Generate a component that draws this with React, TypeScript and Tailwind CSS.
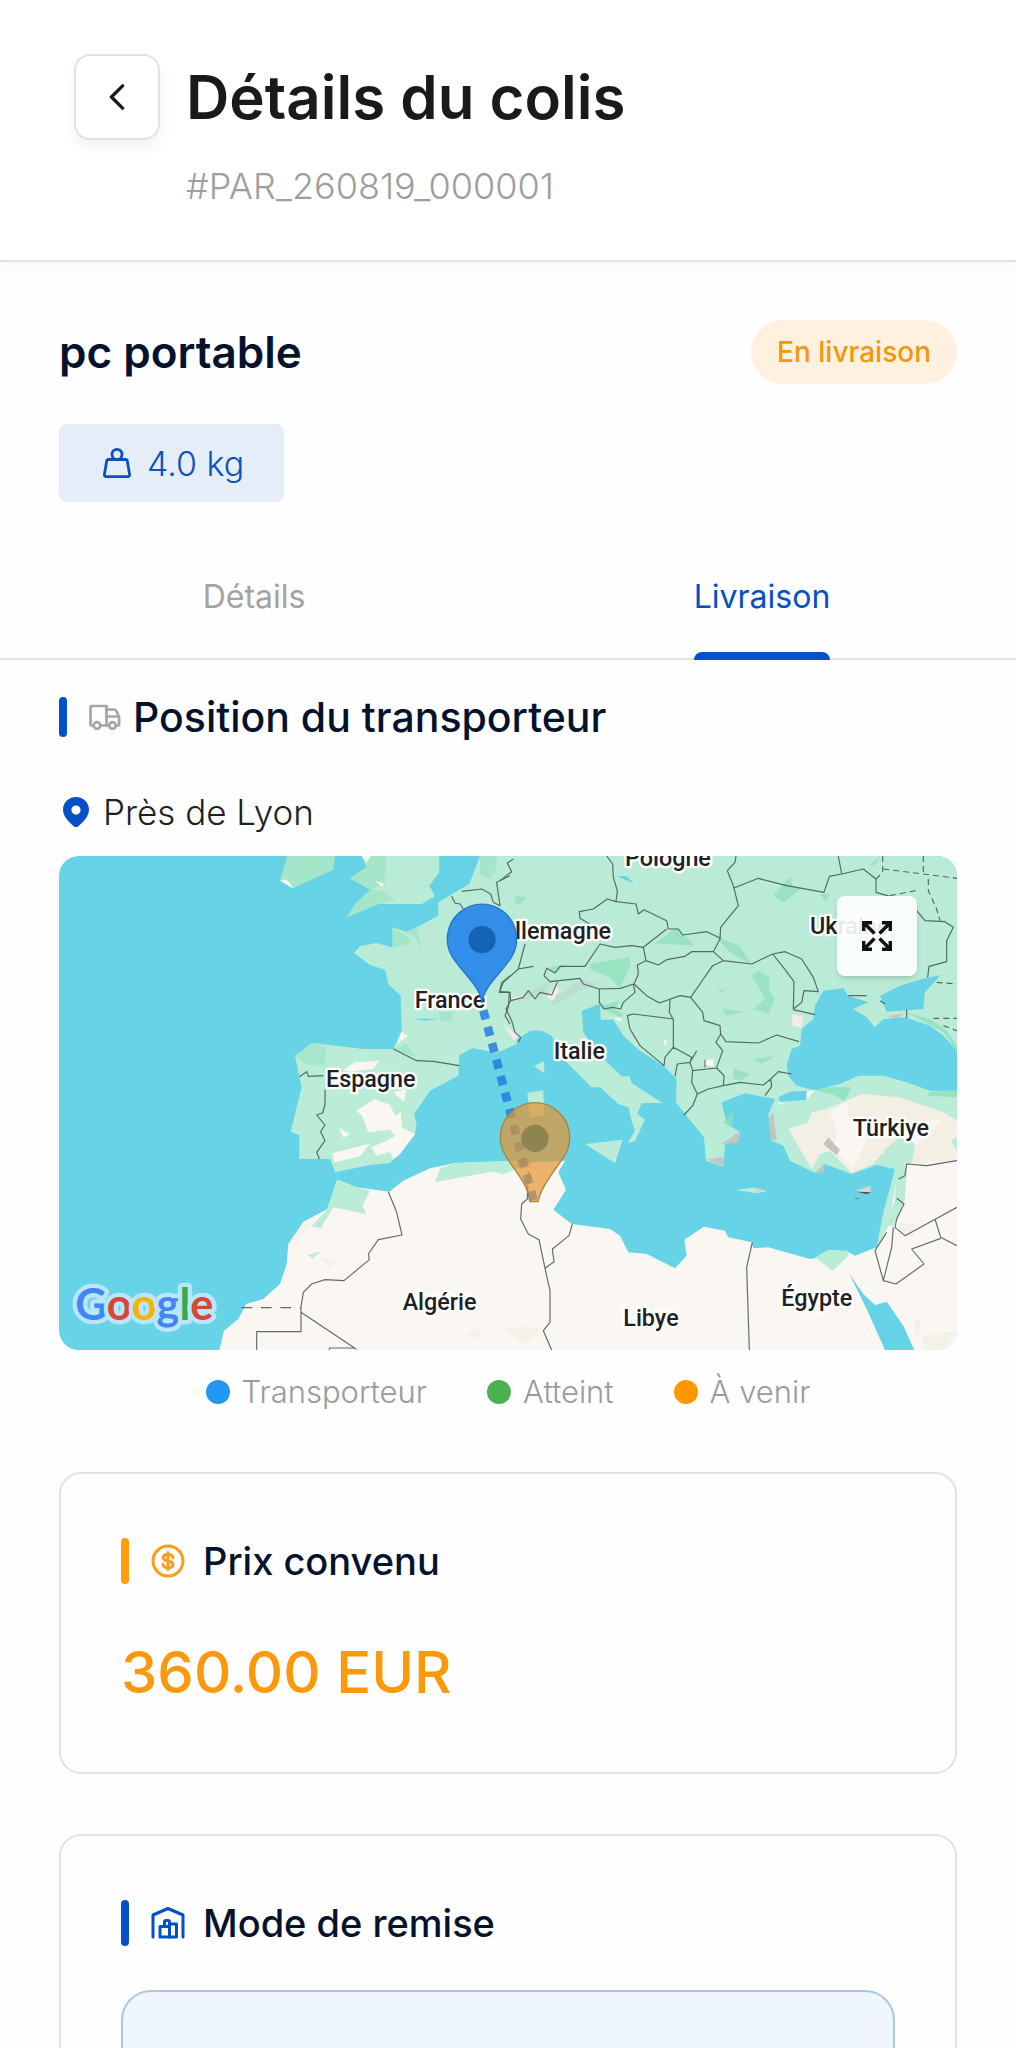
import type { ReactNode } from 'react';

const SEA = '#67d3e6';
const LAND = '#bbecd8';
const SAND = '#faf7f3';
const FOREST = '#8de0bd';

function WeightIcon() {
  return (
    <svg viewBox="0 0 28 30" className="h-[30px] w-7" fill="none" stroke="currentColor" strokeWidth="2.8" strokeLinejoin="round" aria-hidden="true">
      <circle cx="14" cy="6.4" r="5" />
      <path d="M5.5 11.5h17a1.8 1.8 0 0 1 1.8 1.5l2.3 13.5a1.8 1.8 0 0 1-1.8 2.1H3.2a1.8 1.8 0 0 1-1.8-2.1L3.7 13a1.8 1.8 0 0 1 1.8-1.5Z" />
    </svg>
  );
}

function TruckIcon() {
  return (
    <svg viewBox="0 0 32 26" className="h-[26px] w-8 text-[#a6a6a6]" fill="none" stroke="currentColor" strokeWidth="2.7" strokeLinecap="round" strokeLinejoin="round" aria-hidden="true">
      <path d="M4.500 21.500H2.500a1 1 0 0 1-1-1V3a1 1 0 0 1 1-1h15v19.500H11.500" />
      <path d="M17.500 5.500h7.500c1.200 0 2 .6 2.500 1.700l2 4.300c.4.900.6 1.500.6 2.500v6c0 1-.6 1.500-1.500 1.500h-1.600" />
      <path d="M17.500 12.500h12" />
      <circle cx="8" cy="21.500" r="3.300" />
      <circle cx="23.500" cy="21.500" r="3.300" />
      <path d="M17.500 21.500h2.500" />
    </svg>
  );
}

function LocationIcon() {
  return (
    <svg viewBox="0 0 26 30" className="h-[30px] w-[26px] text-[#0550c8]" fill="currentColor" aria-hidden="true">
      <path
        fillRule="evenodd"
        d="M13 0C5.600 0 0 5.600 0 12.600c0 6.200 4.800 11.600 10.300 16.400a4 4 0 0 0 5.400 0C21.200 24.200 26 18.800 26 12.600 26 5.600 20.400 0 13 0Zm0 8.500a4.600 4.600 0 1 1 0 9.200 4.600 4.600 0 0 1 0-9.200Z"
      />
    </svg>
  );
}

function DollarIcon() {
  return (
    <svg viewBox="0 0 34 34" className="size-[34px] text-[#f99d1c]" fill="none" stroke="currentColor" strokeWidth="3" strokeLinecap="round" aria-hidden="true">
      <circle cx="17" cy="17" r="15" />
      <path d="M17 8.500v17M22 13.800c0-2-2-3.400-5-3.400s-5 1.200-5 3.200c0 2.400 2.200 2.900 5 3.400s5 1.200 5 3.500c0 2.100-2.200 3.300-5 3.300s-5-1.400-5-3.500" />
    </svg>
  );
}

function WarehouseIcon() {
  return (
    <svg viewBox="0 0 34 34" className="size-[34px] text-[#0550c8]" fill="none" stroke="currentColor" strokeWidth="3" strokeLinecap="round" strokeLinejoin="round" aria-hidden="true">
      <path d="M2 31V9L17 2.500 32 9V31" />
      <path d="M18.500 18H25.500V31H9V20.500h9.500" />
      <path d="M18.500 31V16a1.500 1.500 0 0 0-1.500-1.500h-2a1.500 1.500 0 0 0-1.500 1.500V20.500" />
    </svg>
  );
}

function ExpandIcon() {
  return (
    <svg viewBox="0 0 30 30" className="size-[30px]" fill="none" stroke="#111" strokeWidth="3.400" aria-hidden="true">
      <path d="M1.700 10V1.700H10M20 1.700h8.300V10M28.300 20v8.300H20M10 28.300H1.700V20" />
      <path d="m2 2 10.500 10.500M28 2 17.500 12.500M28 28 17.500 17.500M2 28l10.500-10.500" />
    </svg>
  );
}

function MapLabel({ x, y, children }: { x: number; y: number; children: ReactNode }) {
  return (
    <text x={x} y={y} fontSize="70" fontWeight="500" fill="#202124" stroke="#fff" strokeWidth="14" strokeLinejoin="round" paintOrder="stroke">
      {children}
    </text>
  );
}

function CarrierMap() {
  return (
    <svg viewBox="27 21 2694 1482" className="block w-full font-[Roboto,sans-serif]" role="img" aria-label="Carte du trajet">
      <rect x="27" y="21" width="2694" height="1482" fill={SEA} />

      {/* British Isles */}
      <g fill={LAND}>
        <path d="M712 21 690 95 728 118 850 62 855 21Z" fill="#a6e6cb" />
        <path d="M935 21 950 55 900 88 962 122 920 160 890 205 985 165 1115 165 1155 142 1138 110 1168 70V21Z" />
        <path d="M935 21 950 55 900 88 962 122 1005 105 1010 21ZM962 122 920 160 890 205 985 165 1035 155 1000 125Z" fill="#a6e6cb" />
        <path d="m690 95 18-4 15 14 5 13ZM935 21l15 20 12-20ZM975 95l25 8-2 12Z" fill="#eefaf4" />
      </g>

      {/* France and Iberia */}
      <path
        fill={LAND}
        d="M1290 21 1258 105 1165 160V200L1100 235 1068 248 1028 235V296L980 282 930 292 912 312 960 348 1005 362 1015 405 1052 440 1055 545 1030 600H940L785 582 735 620 755 715 722 848 748 858V930H840L855 970 960 948 1018 943 1050 915 1095 855 1100 825 1092 795 1140 725 1225 680 1228 618 1268 597 1340 612 1400 585V21Z"
      />
      <g fill="#a6e6cb">
        <path d="m785 582 45 12-5 55-55-3-35-25ZM1028 235l60 40-20 12-40 10ZM1068 248l32-13 15 66-20-34ZM1290 21h70l-40 70-30-15ZM1165 490l42-5v38l-38-10ZM1030 600l40-15 30 40Z" />
      </g>
      <g fill={SAND}>
        <path d="M880 662 915 640 988 635 970 660 900 668ZM918 785 975 750 1020 768 1035 800 1053 790 1055 835 1095 855 1050 915 1030 930 1020 908 980 920 965 895 1000 880 1035 862 1020 842 955 850 935 798ZM868 838l32 18-20 10ZM848 912l112-28-30 38-78 18ZM1030 730l40-10-8 40ZM1054 548l20 12-32 24Z" />
        <path d="m1360 525 30-12v48Z" fill="#f3ebe6" />
      </g>
      <path d="M1085 509h80l-35 6Z" fill={SEA} />

      {/* Maghreb */}
      <path
        fill={SAND}
        d="M862 992 832 1080 760 1118 715 1185 710 1245 690 1305 640 1350 588 1365 565 1410 522 1445 508 1503H1400V935L1215 942 1140 958 1060 995 1018 1028 920 1015Z"
      />
      <path fill={LAND} d="M862 992 920 1015 960 1025 938 1070 948 1095 850 1075 812 1138 785 1132 832 1080ZM1170 958 1215 942 1400 935V985L1325 968 1155 1000ZM772 1218l45-12-30 22Z" />
      <path fill="#f5f1e8" d="m810 1225 52 10-22 22ZM1248 1455l44-18v34ZM1352 1448l40-10v34ZM715 1185l45-60 30-10-42 52Z" />

      <g transform="translate(1350)">
        {/* Central Europe, Balkans, Anatolia */}
        <path
          fill={LAND}
          d="M-10 21H1371V945H1220L1190 1000 1165 1130 1130 1195 1150 1090 1185 960 1130 948 1055 975 975 945 945 972 870 935 850 890 815 875 805 795 825 750 735 733 665 760 680 825 720 850 715 878 675 885 670 953 618 935 612 865 575 820 528 760 530 690 490 650 420 605 370 560 340 512H302L300 465 245 485 250 550 300 620 365 682H388L395 702 487 762H425L412 795 435 812 405 875 383 883 405 845 395 815 385 775 355 765 300 715H275L245 685 190 630 155 560 125 545H90L40 580-10 600Z"
        />
        <g fill={FOREST}>
          <path d="M465 283 530 235 585 290ZM645 262 720 290 752 345 690 310ZM270 345l120-20v25l-30 70-30-35-60-25ZM755 380l20-15 35 20-5 35 20 30-20 45-45-15 35-30-15-30ZM820 138l50-55 10 35 30-5-60 48ZM960 135h30l-12 25ZM668 480l65 8-55 12ZM755 630l70-8-38 22ZM700 658l50 18-25 18-25-5ZM302 470l58-15-20 25 30 15-5 10-60-25ZM145 355l60-10-40 28ZM45 140l35 5-20 25-15-10ZM1105 50l35-27-15 25ZM650 420l28 2-14 8Z" opacity=".75" />
          <path d="M1220 490 1330 550 1371 605V590L1340 545 1290 510ZM900 715h155l-20 40-40-20ZM1290 728l81-3v20l-90-5ZM670 820l30-35-5 50Z" opacity=".8" />
        </g>
        <path fill="#bfd9cf" d="m40 460 120-70-30 50 60-10 50-40 60 15-60 20-80 45-20-40-60 20Z" opacity=".8" />
        <path fill="#f3ebe6" d="m140 445 30-40 8 20-20 30ZM10 525l45 35-15 15ZM30 445l55-5-40 15ZM877 495l35 10-8 32-28-10Z" />
        <path fill={SAND} d="m340 505 28 5-10 8ZM490 570l12 8-8 14ZM610 635l30-5v22l-28-5Z" />
        <path fill={SEA} d="m350 82 30 0 20 20Z" />

        {/* Black Sea and Azov */}
        <path
          fill={SEA}
          d="M945 470 970 425 1030 418 1045 440 1105 460 1060 480 1100 505 1125 535 1150 510 1215 505 1290 530 1330 560 1371 605V725H1290L1220 700 1150 680H1075L1020 705 945 722 890 710 865 680 860 650 875 600 900 590 905 540 940 510ZM1140 440 1200 410 1275 388 1322 378 1275 430 1270 480 1160 488ZM835 745 870 728 920 725V752L840 758Z"
        />

        {/* Anatolian plateau */}
        <path fill="#f4efe4" d="M865 840 925 820 935 790 980 780 1050 750 1085 735 1200 745 1330 790 1371 815V938L1230 945 1240 905 1195 885 1140 920 1120 945 1055 972 990 905 960 915 935 960Z" />
        <path fill={SAND} d="m990 790 50-30 10 60 60 30-50 110-60-60 10-50ZM1180 830l150-20-60 60-30 25-45-20ZM920 728l25-5-25 30ZM830 760l25 2-15 6Z" />
        <path fill={LAND} d="m1150 905 55-45 40 25-10 60-50-10ZM1352 875l19-10v40ZM1145 730l30 5 5 12Z" />
        <path fill="#c5c4c1" d="m985 865 35 38-10 15-40-32ZM945 972l30-32-5 30ZM820 790l10 85-18-5-6-60ZM620 932l50-8v28ZM665 885l50-35 5 15-5 15ZM1160 502l50-8-20 14Z" />

        {/* Islands */}
        <path fill={LAND} d="m102 652 30-15 1 36ZM82 732l48-8 2 76-42 6ZM255 885l113-13-23 71ZM705 1022l60-6 36 10-30 7Z" />
        <path fill="#d8d5d0" d="m760 1018 40 8-30 7ZM1065 1025l48-15-3 22-25-4Z" />
        <path d="m1070 1028 44 2-14 6ZM1062 1048l18 0-8 3Z" fill="#555" />

        {/* Libya, Egypt, Levant */}
        <path
          fill={SAND}
          d="M-10 985 95 940 195 935 175 970 198 1022 160 1082 215 1125 330 1140 360 1160 385 1210 440 1215 525 1258 560 1220 553 1172 612 1133 675 1145 685 1165 755 1180 760 1198 805 1195 930 1230 1045 1210 1065 1220 1130 1195 1165 1130 1190 990 1220 945 1371 935V1503H-10Z"
        />
        <path fill={LAND} d="M945 1225 985 1202 1045 1205V1222L998 1265ZM1190 960 1220 955 1215 1050 1180 1130 1160 1130 1185 1050Z" />
        <path fill={SEA} d="M1048 1275 1090 1335 1125 1368 1160 1358 1210 1430 1243 1503H1155L1100 1380Z" />
        <path fill="#f5f1e8" d="m5 1440 70-8 50 8-50 42ZM1195 1120l50 5-5 40-40-5ZM1265 1460l106-15-40 58h-55ZM1250 1395l12 30-10 40-8-35Z" />
      </g>

      {/* Borders */}
      <g fill="none" stroke="#3c4a47" strokeWidth="3.500" strokeLinejoin="round" opacity=".8">
        <path d="M1205 142 1215 162 1230 165 1240 180M1235 127 1295 120 1322 135 1330 160 1350 170 1340 100 1380 80" />
        <path d="M1030 600 1100 635 1150 637 1228 650M748 683 770 668 775 682 820 680M825 722V765L818 792 800 798 825 828 812 848 825 875 800 910 808 930" />
        <path d="M1015 1028 1040 1090 1056 1158 985 1172 955 1215 958 1232 882 1295 825 1292 785 1305 760 1330 753 1375V1448H620V1503M753 1390 918 1500 912 1497H838V1503" />
        <path d="M575 1376H753" strokeDasharray="32 26" />
        <path d="M1380 380 1355 402 1348 430 1378 430 1375 475 1365 500 1380 525" />
        <g transform="translate(1350)">
          <path d="M40 30 22 42 35 68 0 95M320 21 338 45 340 85 352 125 348 158 408 165 415 195 432 182 500 215 505 240M348 158 322 150 280 180 238 188 240 208 310 250M500 240 430 295 395 290 345 295 300 285 255 352 180 352 165 372 140 358 132 380 150 398 240 388 250 405 298 420 362 418 400 405" />
          <path d="M75 285 55 360 10 400 0 425M55 360 100 352M0 428 30 430 32 455 70 445 85 425 105 450 120 430 155 438 172 400M32 455 18 480 35 515 45 550 62 565 55 580" />
          <path d="M708 21 705 40 682 65 700 110 715 170 662 235 660 270 640 308 670 335 755 345 818 315M700 118 775 88 860 110 972 130 988 82 1025 75 1015 21M1025 75 1090 60 1128 90V130L1170 142M1250 185 1275 215 1335 218 1360 235 1340 275V338L1287 352 1283 385" />
          <path d="M505 240 535 240 548 258 620 248 662 268M430 295 438 335 475 348 500 332 555 322 575 308 640 308M438 335 412 348 415 375 402 405 440 440 478 462 540 440 572 445 610 390 638 350 670 335" />
          <path d="M298 420V460L312 480 338 475 362 480 370 460 405 430 400 405M382 500 400 495 520 510V595L495 625 492 650 420 590 390 540ZM510 452 508 490 520 512M572 445 608 490 612 515 660 530 662 555 678 578 775 582 830 558 897 578M662 555 648 580 668 605 650 655M520 595 575 625 570 640M525 682 532 645 570 640 578 665 650 657 672 680 670 710 625 720 592 735 575 700 578 665M592 735 578 770 552 798M670 710 720 700 790 708 812 690 835 668 875 675M812 690 815 712 795 740M615 632V655M570 640 590 605M818 315 855 308 905 330 940 385 955 428 912 425 905 460 880 480 882 398 850 355 818 315M880 482 945 497" />
          <path d="M1045 440 1100 440M1140 455 1155 465M1220 482V507M1220 945 1280 950 1371 935M1220 945 1215 980 1195 990M1190 1048 1212 1065 1190 1110 1185 1135 1215 1160 1371 1075M1305 1110 1322 1165 1371 1190M1322 1168 1235 1200 1272 1245 1188 1305 1150 1295 1125 1205 1160 1150M1150 1295 1175 1195 1180 1135" />
          <path d="M1150 60 1371 88M1270 21V75M1148 21V70L1128 90M1285 90V125L1310 180 1320 215M1170 140 1255 123M1310 400 1371 405M1300 508 1371 508M1330 530 1371 545" strokeDasharray="18 12" />
          <path d="M85 965 82 1050 65 1065 62 1110 85 1155 117 1172 135 1258 150 1325V1420L130 1445 155 1503M217 1125 207 1160 157 1200 162 1238 135 1258M757 1180 740 1255 748 1503" />
        </g>
      </g>

      {/* Country names */}
      <MapLabel x={1725} y={52}>Pologne</MapLabel>
      <MapLabel x={1349} y={270}>Allemagne</MapLabel>
      <MapLabel x={2280} y={254}>Ukraine</MapLabel>
      <MapLabel x={1094} y={478}>France</MapLabel>
      <MapLabel x={828} y={713}>Espagne</MapLabel>
      <MapLabel x={1511} y={629}>Italie</MapLabel>
      <MapLabel x={2408} y={862}>Türkiye</MapLabel>
      <MapLabel x={1058} y={1383}>Algérie</MapLabel>
      <MapLabel x={1720} y={1432}>Libye</MapLabel>
      <MapLabel x={2194} y={1372}>Égypte</MapLabel>

      {/* Route and markers */}
      <path d="M1300 484 1452 1060" stroke="#1f77e0" strokeWidth="26" strokeDasharray="28 23" opacity=".8" />
      <g>
        <path d="M1296 462C1290 410 1240 375 1208 325A104 104 0 1 1 1384 325C1352 375 1302 410 1296 462Z" fill="#338ee9" stroke="#2476c8" strokeWidth="4" />
        <circle cx="1296" cy="272" r="41" fill="#1463b4" />
      </g>
      <g>
        <path d="M1440 1058C1436 1010 1398 970 1368 922A104 104 0 1 1 1542 922C1512 970 1474 1010 1464 1058Z" fill="#e59331" fillOpacity=".7" stroke="#a5853f" strokeWidth="4" />
        <circle cx="1455" cy="868" r="41" fill="#8c8550" />
      </g>

      {/* Map provider */}
      <text x="76" y="1412" fontSize="130" fontWeight="700" fontFamily="Lato, sans-serif" stroke="#b9e6fa" strokeWidth="26" strokeLinejoin="round" paintOrder="stroke">
        <tspan fill="#4285f4">G</tspan>
        <tspan fill="#db4437">o</tspan>
        <tspan fill="#f4b400">o</tspan>
        <tspan fill="#4285f4">g</tspan>
        <tspan fill="#34a853">l</tspan>
        <tspan fill="#db4437">e</tspan>
      </text>
    </svg>
  );
}

interface SectionTitleProps {
  icon: ReactNode;
  barClass: string;
  textClass?: string;
  children: ReactNode;
}

function SectionTitle({ icon, barClass, textClass = 'text-[38px]', children }: SectionTitleProps) {
  return (
    <h3 className={`flex items-center leading-[46px] font-medium text-[#04122c] ${textClass}`}>
      <span className={`mr-[22px] w-2 rounded-full ${barClass}`} />
      {icon}
      {children}
    </h3>
  );
}

const legend = [
  { label: 'Transporteur', dot: 'bg-[#2196f3]' },
  { label: 'Atteint', dot: 'bg-[#4caf50]' },
  { label: 'À venir', dot: 'bg-[#ff9800]' },
];

export default function App() {
  return (
    <div className="flex h-screen flex-col overflow-hidden bg-[#fefefe] font-[Inter,sans-serif]">
      <header className="z-10 flex gap-[26px] border-b-2 border-[#e2e2e2] bg-white px-[74px] pt-[54px] pb-[50px] shadow-[0_4px_16px_rgba(0,0,0,0.03)]">
        <button
          type="button"
          aria-label="Retour"
          className="flex size-[86px] shrink-0 items-center justify-center rounded-2xl border-2 border-[#e2e2e2] bg-white shadow-[0_8px_16px_rgba(0,0,0,0.05)]"
        >
          <svg viewBox="0 0 16 28" className="h-[26px] w-4" fill="none" stroke="#1a1a1a" strokeWidth="3.600" strokeLinecap="round" strokeLinejoin="round" aria-hidden="true">
            <path d="M14 2 2 14l12 12" />
          </svg>
        </button>
        <div>
          <h1 className="text-[60px] leading-[86px] font-semibold text-[#1a1a1a]">Détails du colis</h1>
          <p className="mt-[22px] text-[36px] leading-[48px] font-light text-[#9e9e9e]">#PAR_260819_000001</p>
        </div>
      </header>

      <main className="flex-1 overflow-y-auto [scrollbar-width:none]">
        <div className="px-[59px] pt-[58px]">
          <div className="flex items-center justify-between">
            <h2 className="text-[44px] leading-[64px] font-semibold text-[#04122c]">pc portable</h2>
            <span className="rounded-full bg-[#fff1e0] px-[26px] text-[28px] leading-[64px] font-medium text-[#f5960f]">En livraison</span>
          </div>
          <div className="mt-10 inline-flex h-[78px] items-center gap-4 rounded-lg bg-[#e5edf9] px-10 pl-11 text-[34px] font-light text-[#0b50bd]">
            <WeightIcon />
            4.0 kg
          </div>
        </div>

        <div role="tablist" className="mt-[50px] grid h-[108px] grid-cols-2 border-b-2 border-[#e2e2e2] text-[32px]">
          <button type="button" role="tab" aria-selected="false" className="flex justify-center leading-[90px] text-[#a3a3a3]">
            Détails
          </button>
          <button type="button" role="tab" aria-selected="true" className="flex justify-center leading-[90px] text-[#0550c8]">
            <span className="relative h-full after:absolute after:inset-x-0 after:-bottom-0.5 after:h-2 after:rounded-t-lg after:bg-[#0550c8]">
              Livraison
            </span>
          </button>
        </div>

        <div className="px-[59px] pt-[34px]">
          <SectionTitle barClass="h-10 bg-[#0550c8]" textClass="text-[41px]" icon={<span className="mr-3"><TruckIcon /></span>}>
            Position du transporteur
          </SectionTitle>

          <div className="mt-12 flex items-center gap-3.5 pl-1 text-[35px] leading-[48px] font-light text-[#1f1f1f]">
            <LocationIcon />
            Près de Lyon
          </div>

          <div className="relative mt-5 overflow-hidden rounded-[20px]">
            <CarrierMap />
            <button
              type="button"
              aria-label="Agrandir la carte"
              className="absolute top-10 right-10 flex size-20 items-center justify-center rounded-lg bg-white/90 shadow-md"
            >
              <ExpandIcon />
            </button>
          </div>

          <ul className="mt-5 flex justify-center gap-[60px] text-[31px] leading-[44px] font-light text-[#9a9a9a]">
            {legend.map((item) => (
              <li key={item.label} className="flex items-center gap-3">
                <span className={`size-6 rounded-full ${item.dot}`} />
                {item.label}
              </li>
            ))}
          </ul>

          <section className="mt-[58px] rounded-[22px] border-2 border-[#e2e2e2] p-[60px] pt-[64px]">
            <SectionTitle barClass="h-[46px] bg-[#ff9d0a]" icon={<span className="mr-[18px]"><DollarIcon /></span>}>
              Prix convenu
            </SectionTitle>
            <p className="mt-12 text-[58px] leading-[80px] font-medium text-[#fc980b]">360.00 EUR</p>
          </section>

          <section className="mt-[60px] rounded-[22px] border-2 border-[#e2e2e2] p-[60px] pt-[64px]">
            <SectionTitle barClass="h-[46px] bg-[#0550c8]" icon={<span className="mr-[18px]"><WarehouseIcon /></span>}>
              Mode de remise
            </SectionTitle>
            <div className="mt-11 h-40 rounded-[30px] border-2 border-[#a9c7e2] bg-[#f0f6fe]" />
          </section>
        </div>
      </main>
    </div>
  );
}
